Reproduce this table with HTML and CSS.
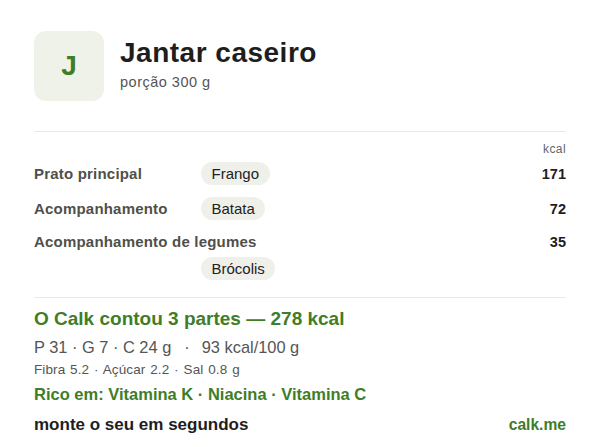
FILE: index.html
```html
<!DOCTYPE html>
<html lang="pt">
<head>
<meta charset="utf-8">
<link rel="stylesheet" href="styles.css">
</head>
<body>
<div class="card">
  <header class="head">
    <div class="avatar">J</div>
    <div class="head-text">
      <h1 class="title">Jantar caseiro</h1>
      <div class="sub">porção 300 g</div>
    </div>
  </header>
  <div class="parts">
    <div class="unit">kcal</div>
    <div class="row">
      <div class="label">Prato principal</div>
      <div class="chips"><span class="chip">Frango</span></div>
      <div class="val">171</div>
    </div>
    <div class="row">
      <div class="label">Acompanhamento</div>
      <div class="chips"><span class="chip">Batata</span></div>
      <div class="val">72</div>
    </div>
    <div class="row row-wide">
      <div class="label">Acompanhamento de legumes</div>
      <div class="val">35</div>
      <div class="chips chips-below"><span class="chip">Brócolis</span></div>
    </div>
  </div>
  <div class="summary">
    <div class="total">O Calk contou 3 partes — 278 kcal</div>
    <div class="macros">P 31 · G 7 · C 24 g<span class="sep">·</span>93 kcal/100 g</div>
    <div class="micro">Fibra 5.2 · Açúcar 2.2 · Sal 0.8 g</div>
    <div class="rich">Rico em: Vitamina K · Niacina · Vitamina C</div>
    <div class="foot">
      <span class="cta">monte o seu em segundos</span>
      <span class="brand">calk.me</span>
    </div>
  </div>
</div>
</body>
</html>
```

FILE: styles.css
```css
* { box-sizing: border-box; }
html, body { margin: 0; padding: 0; background: #ffffff; }
body {
  font-family: "Liberation Sans", Arial, sans-serif;
  color: #222;
}
.card {
  padding: 31px 34px 0 34px;
}
.head {
  display: flex;
  align-items: center;
  gap: 16px;
}
.avatar {
  width: 70px;
  height: 70px;
  border-radius: 12px;
  background: #eff2e8;
  color: #3f7d27;
  font-weight: 700;
  font-size: 28px;
  display: flex;
  align-items: center;
  justify-content: center;
}
.head-text { display: flex; flex-direction: column; }
.title {
  margin: 0;
  font-size: 28px;
  font-weight: 700;
  letter-spacing: 0.5px;
  color: #1e1e1e;
  line-height: 32px;
  margin-top: -6px;
}
.sub {
  font-size: 14.5px;
  letter-spacing: 0.5px;
  color: #555;
  margin-top: 5px;
}
.parts {
  margin-top: 30px;
  border-top: 1px solid #e8e8e8;
  padding-top: 10px;
}
.unit {
  text-align: right;
  font-size: 12px;
  letter-spacing: 0.4px;
  color: #666;
  line-height: 14px;
}
.row {
  display: grid;
  grid-template-columns: 167px auto 1fr;
  align-items: center;
  margin-top: 6px;
}
.row + .row { margin-top: 12px; }
.label {
  font-size: 15px;
  font-weight: 700;
  letter-spacing: 0.2px;
  color: #505049;
  line-height: 20px;
}
.chips { display: flex; gap: 6px; }
.chip {
  display: inline-block;
  background: #f0f0eb;
  border-radius: 12px;
  padding: 0 10.5px;
  height: 23px;
  font-size: 15px;
  line-height: 23px;
  color: #222;
}
.val {
  grid-column: 3;
  text-align: right;
  font-size: 14.5px;
  font-weight: 700;
  color: #1e1e1e;
}
.row-wide { grid-template-columns: 167px 1fr auto; }
.row-wide .label { grid-column: 1 / 3; grid-row: 1; }
.row-wide .val { grid-column: 3; grid-row: 1; }
.row-wide .chips-below { grid-column: 2; grid-row: 2; margin-top: 5px; }
.summary {
  margin-top: 17px;
  border-top: 1px solid #e8e8e8;
  padding-top: 10px;
}
.total {
  font-size: 19px;
  font-weight: 700;
  color: #3f7d27;
  line-height: 22px;
}
.macros {
  font-size: 16.4px;
  color: #555;
  margin-top: 7px;
  line-height: 20px;
}
.sep { margin: 0 12px 0 13px; }
.micro {
  font-size: 13.5px;
  letter-spacing: 0.1px;
  word-spacing: 1px;
  color: #555;
  margin-top: 5px;
  line-height: 16px;
}
.rich {
  font-size: 16.5px;
  font-weight: 700;
  color: #3f7d27;
  margin-top: 6px;
  line-height: 20px;
}
.foot {
  display: flex;
  justify-content: space-between;
  align-items: baseline;
  margin-top: 11px;
  line-height: 20px;
}
.cta {
  font-size: 17px;
  font-weight: 700;
  color: #1e1e1e;
}
.brand {
  font-size: 15.6px;
  font-weight: 700;
  color: #3f7d27;
}
```
